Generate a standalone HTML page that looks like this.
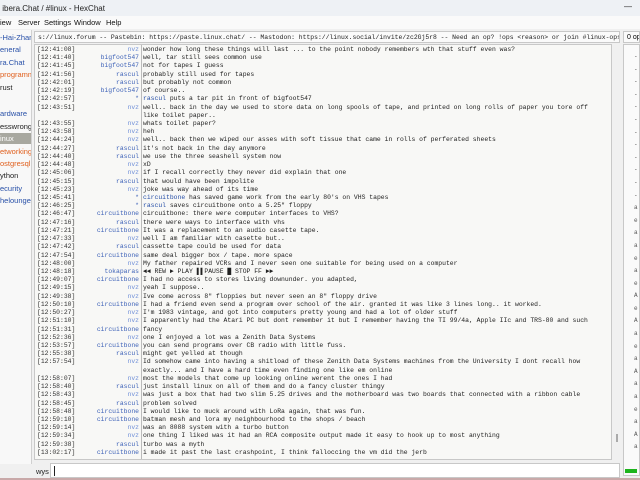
<!DOCTYPE html>
<html><head><meta charset="utf-8"><style>
*{margin:0;padding:0;box-sizing:border-box}
body{width:640px;height:480px;overflow:hidden;background:#f0f0f0;font-family:"Liberation Sans",sans-serif;position:relative}
.title{position:absolute;left:0;top:0;width:640px;height:16px;background:#eef1f5;font-size:8px;color:#222;padding:4px 0 0 0}
.menu{position:absolute;left:0;top:16px;width:640px;height:13px;background:#fafafa;font-size:7.5px;color:#111}
.menu span{position:absolute;top:2px}
.mono{font-family:"Liberation Mono",monospace;font-size:6.4px}
.topic{position:absolute;left:34px;top:31px;width:586px;height:12px;background:#fafafa;border:1px solid #c8c8c8;padding:2px 0 0 3px;white-space:nowrap;overflow:hidden;color:#222}
.tree{position:absolute;left:0;top:30px;width:32px;height:434px;background:#f8f8f8;border-right:1px solid #d0d0d0;font-size:7.5px;overflow:hidden;white-space:nowrap}
.tree div{position:absolute;left:0;height:11px;width:32px;padding-top:1px}
.chat{position:absolute;left:34px;top:44px;width:578px;height:416px;background:#f8f8f6;border:1px solid #c8c8c8;overflow:hidden}
.div{position:absolute;left:106px;top:0;width:1px;height:416px;background:#bbb}
.r{position:absolute;left:0;width:100%;height:8.22px;white-space:nowrap;color:#222}
.r .t{position:absolute;left:2px;color:#333}
.r .n{position:absolute;left:0;width:104px;text-align:right;color:#3f63b8}
.r .n.l{color:#6f8fd8}
.r .m{position:absolute;left:108px}
.b{color:#2850a8}
.sb{position:absolute;left:613px;top:44px;width:8px;height:416px;background:#f0f0f0}
.users{position:absolute;left:623px;top:44px;width:17px;height:432px;background:#fafafa;border:1px solid #c8c8c8}
.ops{position:absolute;left:623px;top:31px;width:17px;height:12px;background:#fafafa;border:1px solid #c8c8c8;font-size:7px;padding:2px 0 0 3px;white-space:nowrap;overflow:hidden}
.input{position:absolute;left:50px;top:463px;width:570px;height:15px;background:#fff;border:1px solid #c8c8c8}
</style></head><body>
<div class="title">&nbsp;ibera.Chat / #linux - HexChat<span style="position:absolute;left:624px;top:2px">—</span></div>
<div class="menu"><span style="left:0">iew</span><span style="left:18px">Server</span><span style="left:44px">Settings</span><span style="left:74px">Window</span><span style="left:106px">Help</span></div>
<div class="tree">
<div style="top:2px;color:#2850a8">-Hai-Zhang</div>
<div style="top:14px;color:#2850a8">eneral</div>
<div style="top:27px;color:#2850a8">ra.Chat</div>
<div style="top:39px;color:#e0601e">programming</div>
<div style="top:52px;color:#222">rust</div>
<div style="top:78px;color:#2850a8">ardware</div>
<div style="top:91px;color:#222">esswrong</div>
<div style="top:103px;background:#a8a8a0;color:#fff">inux</div>
<div style="top:116px;color:#e0601e">etworking</div>
<div style="top:128px;color:#e0601e">ostgresql</div>
<div style="top:140px;color:#222">ython</div>
<div style="top:153px;color:#2850a8">ecurity</div>
<div style="top:165px;color:#2850a8">helounge</div>
</div>
<div class="topic mono">s://linux.forum -- Pastebin: https://paste.linux.chat/ -- Mastodon: https://linux.social/invite/zc2Gj5r8 -- Need an op? !ops &lt;reason&gt; or join #linux-ops</div>
<div class="ops">0 op</div>
<div class="chat mono"><div class="div"></div>
<div class="r" style="top:1px"><span class="t">[12:41:08]</span><span class="n l">nvz</span><span class="m">wonder how long these things will last ... to the point nobody remembers wth that stuff even was?</span></div>
<div class="r" style="top:9.2px"><span class="t">[12:41:40]</span><span class="n">bigfoot547</span><span class="m">well, tar still sees common use</span></div>
<div class="r" style="top:17.4px"><span class="t">[12:41:45]</span><span class="n">bigfoot547</span><span class="m">not for tapes I guess</span></div>
<div class="r" style="top:25.7px"><span class="t">[12:41:56]</span><span class="n">rascul</span><span class="m">probably still used for tapes</span></div>
<div class="r" style="top:33.9px"><span class="t">[12:42:01]</span><span class="n">rascul</span><span class="m">but probably not common</span></div>
<div class="r" style="top:42.1px"><span class="t">[12:42:19]</span><span class="n">bigfoot547</span><span class="m">of course..</span></div>
<div class="r" style="top:50.3px"><span class="t">[12:42:57]</span><span class="n">*</span><span class="m"><span class="b">rascul</span> puts a tar pit in front of bigfoot547</span></div>
<div class="r" style="top:58.5px"><span class="t">[12:43:51]</span><span class="n l">nvz</span><span class="m">well.. back in the day we used to store data on long spools of tape, and printed on long rolls of paper you tore off</span></div>
<div class="r" style="top:66.8px"><span class="m">like toilet paper..</span></div>
<div class="r" style="top:75px"><span class="t">[12:43:55]</span><span class="n l">nvz</span><span class="m">whats toilet paper?</span></div>
<div class="r" style="top:83.2px"><span class="t">[12:43:58]</span><span class="n l">nvz</span><span class="m">heh</span></div>
<div class="r" style="top:91.4px"><span class="t">[12:44:24]</span><span class="n l">nvz</span><span class="m">well.. back then we wiped our asses with soft tissue that came in rolls of perferated sheets</span></div>
<div class="r" style="top:99.6px"><span class="t">[12:44:27]</span><span class="n">rascul</span><span class="m">it's not back in the day anymore</span></div>
<div class="r" style="top:107.9px"><span class="t">[12:44:40]</span><span class="n">rascul</span><span class="m">we use the three seashell system now</span></div>
<div class="r" style="top:116.1px"><span class="t">[12:44:48]</span><span class="n l">nvz</span><span class="m">xD</span></div>
<div class="r" style="top:124.3px"><span class="t">[12:45:06]</span><span class="n l">nvz</span><span class="m">if I recall correctly they never did explain that one</span></div>
<div class="r" style="top:132.5px"><span class="t">[12:45:15]</span><span class="n">rascul</span><span class="m">that would have been impolite</span></div>
<div class="r" style="top:140.7px"><span class="t">[12:45:23]</span><span class="n l">nvz</span><span class="m">joke was way ahead of its time</span></div>
<div class="r" style="top:149px"><span class="t">[12:45:41]</span><span class="n">*</span><span class="m"><span class="b">circuitbone</span> has saved game work from the early 80's on VHS tapes</span></div>
<div class="r" style="top:157.2px"><span class="t">[12:46:25]</span><span class="n">*</span><span class="m"><span class="b">rascul</span> saves circuitbone onto a 5.25" floppy</span></div>
<div class="r" style="top:165.4px"><span class="t">[12:46:47]</span><span class="n">circuitbone</span><span class="m">circuitbone: there were computer interfaces to VHS?</span></div>
<div class="r" style="top:173.6px"><span class="t">[12:47:16]</span><span class="n">rascul</span><span class="m">there were ways to interface with vhs</span></div>
<div class="r" style="top:181.8px"><span class="t">[12:47:21]</span><span class="n">circuitbone</span><span class="m">It was a replacement to an audio casette tape.</span></div>
<div class="r" style="top:190.1px"><span class="t">[12:47:33]</span><span class="n l">nvz</span><span class="m">well I am familiar with casette but..</span></div>
<div class="r" style="top:198.3px"><span class="t">[12:47:42]</span><span class="n">rascul</span><span class="m">cassette tape could be used for data</span></div>
<div class="r" style="top:206.5px"><span class="t">[12:47:54]</span><span class="n">circuitbone</span><span class="m">same deal bigger box / tape. more space</span></div>
<div class="r" style="top:214.7px"><span class="t">[12:48:00]</span><span class="n l">nvz</span><span class="m">My father repaired VCRs and I never seen one suitable for being used on a computer</span></div>
<div class="r" style="top:222.9px"><span class="t">[12:48:18]</span><span class="n">tokaparas</span><span class="m">◄◄ REW ► PLAY ▌▌PAUSE █ STOP FF ►►</span></div>
<div class="r" style="top:231.2px"><span class="t">[12:49:07]</span><span class="n">circuitbone</span><span class="m">I had no access to stores living downunder. you adapted,</span></div>
<div class="r" style="top:239.4px"><span class="t">[12:49:15]</span><span class="n l">nvz</span><span class="m">yeah I suppose..</span></div>
<div class="r" style="top:247.6px"><span class="t">[12:49:38]</span><span class="n l">nvz</span><span class="m">Ive come across 8" floppies but never seen an 8" floppy drive</span></div>
<div class="r" style="top:255.8px"><span class="t">[12:50:10]</span><span class="n">circuitbone</span><span class="m">I had a friend even send a program over school of the air. granted it was like 3 lines long.. it worked.</span></div>
<div class="r" style="top:264px"><span class="t">[12:50:27]</span><span class="n l">nvz</span><span class="m">I'm 1983 vintage, and got into computers pretty young and had a lot of older stuff</span></div>
<div class="r" style="top:272.3px"><span class="t">[12:51:10]</span><span class="n l">nvz</span><span class="m">I apparently had the Atari PC but dont remember it but I remember having the TI 99/4a, Apple IIc and TRS-80 and such</span></div>
<div class="r" style="top:280.5px"><span class="t">[12:51:31]</span><span class="n">circuitbone</span><span class="m">fancy</span></div>
<div class="r" style="top:288.7px"><span class="t">[12:52:36]</span><span class="n l">nvz</span><span class="m">one I enjoyed a lot was a Zenith Data Systems</span></div>
<div class="r" style="top:296.9px"><span class="t">[12:53:57]</span><span class="n">circuitbone</span><span class="m">you can send programs over CB radio with little fuss.</span></div>
<div class="r" style="top:305.1px"><span class="t">[12:55:38]</span><span class="n">rascul</span><span class="m">might get yelled at though</span></div>
<div class="r" style="top:313.4px"><span class="t">[12:57:54]</span><span class="n l">nvz</span><span class="m">Id somehow came into having a shitload of these Zenith Data Systems machines from the University I dont recall how</span></div>
<div class="r" style="top:321.6px"><span class="m">exactly... and I have a hard time even finding one like em online</span></div>
<div class="r" style="top:329.8px"><span class="t">[12:58:07]</span><span class="n l">nvz</span><span class="m">most the models that come up looking online werent the ones I had</span></div>
<div class="r" style="top:338px"><span class="t">[12:58:40]</span><span class="n">rascul</span><span class="m">just install linux on all of them and do a fancy cluster thingy</span></div>
<div class="r" style="top:346.2px"><span class="t">[12:58:43]</span><span class="n l">nvz</span><span class="m">was just a box that had two slim 5.25 drives and the motherboard was two boards that connected with a ribbon cable</span></div>
<div class="r" style="top:354.5px"><span class="t">[12:58:45]</span><span class="n">rascul</span><span class="m">problem solved</span></div>
<div class="r" style="top:362.7px"><span class="t">[12:58:48]</span><span class="n">circuitbone</span><span class="m">I would like to muck around with LoRa again, that was fun.</span></div>
<div class="r" style="top:370.9px"><span class="t">[12:59:10]</span><span class="n">circuitbone</span><span class="m">batman mesh and lora my neighbourhood to the shops / beach</span></div>
<div class="r" style="top:379.1px"><span class="t">[12:59:14]</span><span class="n l">nvz</span><span class="m">was an 8088 system with a turbo button</span></div>
<div class="r" style="top:387.3px"><span class="t">[12:59:34]</span><span class="n l">nvz</span><span class="m">one thing I liked was it had an RCA composite output made it easy to hook up to most anything</span></div>
<div class="r" style="top:395.6px"><span class="t">[12:59:38]</span><span class="n">rascul</span><span class="m">turbo was a myth</span></div>
<div class="r" style="top:403.8px"><span class="t">[13:02:17]</span><span class="n">circuitbone</span><span class="m">i made it past the last crashpoint, I think falloccing the vm did the jerb</span></div>
</div>
<div class="sb"><div style="position:absolute;left:3px;top:390px;width:2px;height:8px;background:#aaa"></div></div>
<div class="users mono" style="color:#555;font-size:6px">
<div style="position:absolute;left:10px;top:6px;line-height:12.6px">-<br>-<br>-<br>-<br>-<br>-<br>-<br>-<br>-<br>-<br>-<br>-<br>a<br>e<br>a<br>a<br>e<br>a<br>e<br>A<br>e<br>A<br>a<br>e<br>a<br>A<br>a<br>a<br>e<br>a<br>A<br>a</div>
<div style="position:absolute;left:1px;top:424px;width:12px;height:4px;background:#1db41d"></div>
</div>
<div style="position:absolute;left:36px;top:467px;font-size:7.5px;color:#222">wys</div>
<div class="input"><div style="position:absolute;left:3px;top:2px;width:1px;height:10px;background:#222"></div></div>
<div style="position:absolute;left:0;top:478px;width:640px;height:2px;background:#c9a9a9"></div>
</body></html>
